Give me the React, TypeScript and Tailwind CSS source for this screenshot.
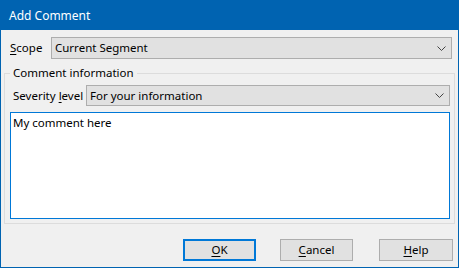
import React from 'react';

const Chevron: React.FC = () => (
  <svg width="9" height="5" viewBox="0 0 9 5" className="shrink-0">
    <polyline points="0.5,0.5 4.5,4.5 8.5,0.5" fill="none" stroke="#444" strokeWidth="1" />
  </svg>
);

interface ComboProps {
  value: string;
  className: string;
}

const Combo: React.FC<ComboProps> = ({ value, className }) => (
  <div className={`shrink-0 flex items-center justify-between border border-[#adadad] bg-[#e1e1e1] pl-[3px] pr-[5px] ${className}`}>
    <span className="whitespace-nowrap">{value}</span>
    <Chevron />
  </div>
);

const Btn: React.FC<{ hot: string; rest: string; w: string; focus?: boolean }> = ({ hot, rest, w, focus }) => (
  <button
    className={`shrink-0 h-[22px] ${w} flex items-center justify-center bg-[#e1e1e1] ${
      focus ? 'border-2 border-[#0078d7]' : 'border border-[#adadad]'
    }`}
  >
    <span>
      <span className="underline underline-offset-2">{hot}</span>
      {rest}
    </span>
  </button>
);

export default function App() {
  return (
    <div
      className="w-[459px] h-[268px] flex flex-col border border-[#0063b1] bg-[#f0f0f0] text-[11.5px] text-black"
      style={{ fontFamily: '"Noto Sans", "Liberation Sans", sans-serif' }}
    >
      <div className="h-[29px] shrink-0 bg-[#0063b1] flex items-center pl-[8px] text-white text-[12px]">
        Add Comment
      </div>

      <div className="flex items-center mt-[7px] pl-[9px]">
        <span className="w-[41px] shrink-0">
          <span className="underline underline-offset-2">S</span>cope
        </span>
        <Combo value="Current Segment" className="w-[401px] h-[22px]" />
      </div>

      <div className="relative mt-[14px] ml-[3px] w-[451px] h-[151px] border border-[#dcdcdc] flex flex-col">
        <span className="absolute -top-[9px] left-[5px] px-[3px] bg-[#f0f0f0] leading-[16px] whitespace-nowrap">
          Comment information
        </span>
        <div className="flex items-center mt-[11px] pl-[8px]">
          <span className="w-[73px] shrink-0 whitespace-nowrap">
            Severity <span className="underline underline-offset-2">l</span>evel
          </span>
          <Combo value="For your information" className="w-[364px] h-[21px]" />
        </div>
        <div className="mt-[6px] ml-[5px] w-[440px] h-[107px] border border-[#0078d7] bg-white px-[2px] py-[1px]">
          My comment here
        </div>
      </div>

      <div className="flex justify-end mt-[15px] pr-[5px]">
        <Btn hot="O" rest="K" w="w-[73px]" focus />
        <div className="w-[24px] shrink-0" />
        <Btn hot="C" rest="ancel" w="w-[73px]" />
        <div className="w-[26px] shrink-0" />
        <Btn hot="H" rest="elp" w="w-[74px]" />
      </div>
    </div>
  );
}
